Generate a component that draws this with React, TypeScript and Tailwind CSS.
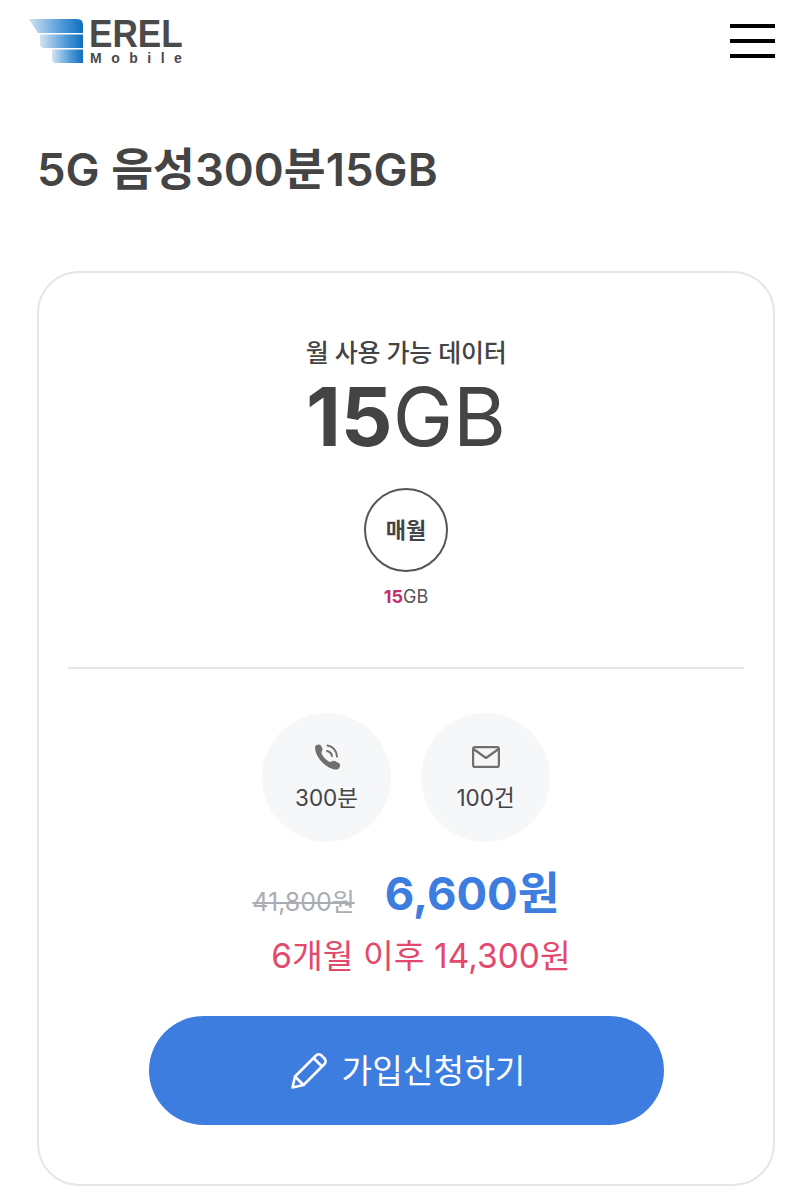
const sans = "font-['Inter','Noto_Sans_CJK_KR',sans-serif]";

function Logo() {
  return (
    <div className="flex items-start">
      <svg width="56" height="46" viewBox="0 0 56 46">
        <defs>
          <linearGradient id="wing" x1="0" x2="1" y1="0" y2="0">
            <stop offset="0" stopColor="#d3e3f3" />
            <stop offset="0.6" stopColor="#4f9ad8" />
            <stop offset="1" stopColor="#0f6fbd" />
          </linearGradient>
        </defs>
        <path d="M1 1H49Q55 1 55 7V15H10Z" fill="url(#wing)" />
        <path d="M12 16.500H55V30H16Q12 30 12 26Z" fill="url(#wing)" />
        <path d="M24 31.500H55V45H28Q24 45 24 41Z" fill="url(#wing)" />
      </svg>
      <div className="ml-[5px] flex flex-col font-['Liberation_Sans',sans-serif] text-[#4a4a4a]">
        <span className="origin-left scale-x-90 text-[39px] leading-[32px] font-bold">EREL</span>
        <span className="mt-[2px] ml-[1px] text-[14px] leading-[12px] font-bold tracking-[9.500px]">Mobile</span>
      </div>
    </div>
  );
}

function Stat({ icon, label }: { icon: React.ReactNode; label: string }) {
  return (
    <div className="flex h-[129px] w-[129px] flex-col items-center justify-center rounded-full bg-[#f6f7f9]">
      <div className="flex h-[30px] items-center">{icon}</div>
      <span className="mt-[10px] text-[22.500px] leading-[32px] text-[#444]">{label}</span>
    </div>
  );
}

export default function App() {
  return (
    <div className={`${sans} h-[1200px] w-[811px] overflow-hidden bg-white`}>
      <header className="mt-[18px] flex h-[46px] items-start justify-between pr-[36px] pl-[28px]">
        <Logo />
        <button className="mt-[6px] flex w-[45px] flex-col gap-[11.500px]">
          <span className="h-[3.500px] bg-black" />
          <span className="h-[3.500px] bg-black" />
          <span className="h-[3.500px] bg-black" />
        </button>
      </header>

      <h1 className="mt-[79px] ml-[37px] text-[45.500px] leading-[54px] font-semibold text-[#444]">5G 음성300분15GB</h1>

      <section className="mt-[74px] ml-[37px] flex h-[915px] w-[738px] flex-col items-center rounded-[42px] border-2 border-[#e6e6e6] pt-[62px]">
        <p className="text-[25px] leading-[36px] font-medium tracking-[-0.300px] text-[#444]">월 사용 가능 데이터</p>
        <p className="mt-[1px] text-[81px] leading-[90px] text-[#444]">
          <span className="font-bold">15</span>GB
        </p>
        <div className="mt-[26px] flex h-[84px] w-[84px] items-center justify-center rounded-full border-2 border-[#555]">
          <span className="text-[22px] font-bold text-[#444]">매월</span>
        </div>
        <p className="mt-[13px] text-[18px] leading-[24px] text-[#555]">
          <span className="font-bold text-[#c2306f]">15</span>GB
        </p>

        <div className="mt-[58px] h-[2px] w-[676px] bg-[#e6e6e6]" />

        <div className="mt-[44px] flex gap-[30px]">
          <Stat
            label="300분"
            icon={
              <svg width="30" height="30" viewBox="0 0 30 30" fill="none">
                <path d="M3 5.500C3 3 6.500 1.500 8.500 3L10 5.500C11 7.500 10.500 9 9.500 10L9.500 11.500C11 15 14 18 17.500 20L19.500 19.500C21 18.500 22.500 18.500 24 19.500L27.500 21.500C29 23.500 27.500 27 25 27.500C16 28 3.500 17 3 5.500Z" fill="#6f6f6f" />
                <path d="M15 9C17.500 9.500 19.500 11.500 20 14M15.500 3.500C20.500 4 24.500 8.500 25 14.500" stroke="#6f6f6f" strokeWidth="2" strokeLinecap="round" />
              </svg>
            }
          />
          <Stat
            label="100건"
            icon={
              <svg width="28" height="22" viewBox="0 0 28 22" fill="none" stroke="#6f6f6f" strokeWidth="2.200">
                <rect x="1.100" y="1.100" width="25.800" height="19.800" rx="2" />
                <path d="M1.500 3L14 12L26.500 3" strokeLinejoin="round" />
              </svg>
            }
          />
        </div>

        <div className="mt-[19px] flex items-center gap-[30px]">
          <span className="mt-[16px] text-[25px] leading-[32px] text-[#a9adb2] line-through">41,800원</span>
          <span className="text-[45.500px] leading-[66px] font-bold text-[#3d7de0]">6,600원</span>
        </div>
        <p className="mt-[6px] ml-[30px] text-[33.500px] leading-[46px] text-[#e2496d]">6개월 이후 14,300원</p>

        <button className="mt-[37px] flex h-[109px] w-[515px] items-center justify-center gap-[14px] rounded-full bg-[#3d7de0] pl-[3px] text-white">
          <svg width="38" height="38" viewBox="0 0 38 38" fill="none" stroke="white" strokeWidth="2.600" strokeLinejoin="round">
            <path d="M2.500 35.500L5 24.500L26 3.500C27.500 2 30 2 31.500 3.500L34.500 6.500C36 8 36 10.500 34.500 12L13.500 33Z" />
            <path d="M23.500 6L32 14.500M5 24.500L13.500 33" />
          </svg>
          <span className="text-[33.300px] leading-[44px]">가입신청하기</span>
        </button>
      </section>
    </div>
  );
}
